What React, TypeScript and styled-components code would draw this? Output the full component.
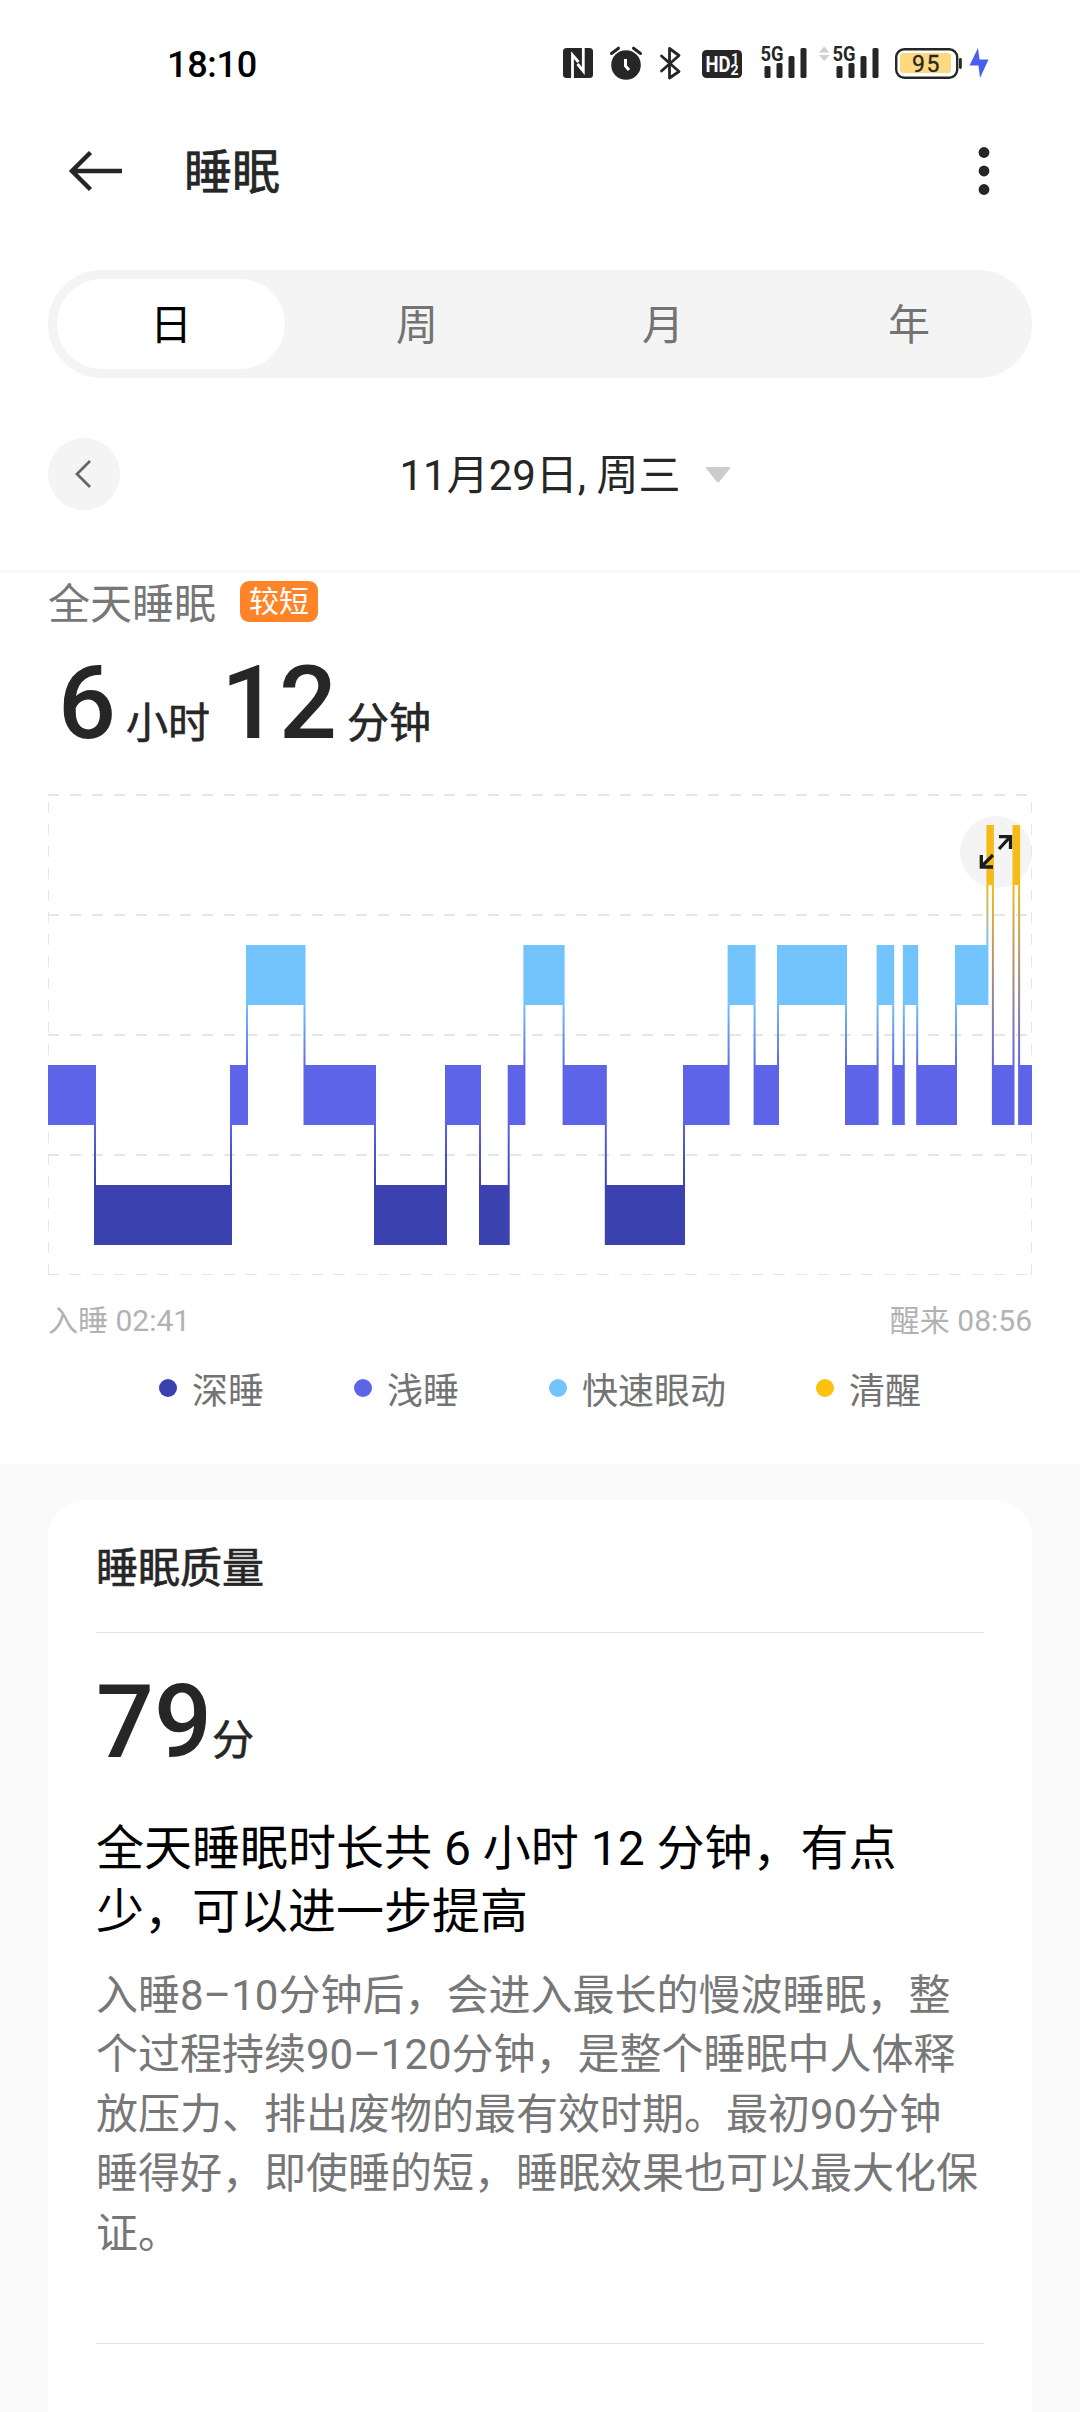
import React from "react";
import styled, { createGlobalStyle } from "styled-components";

const GlobalStyle = createGlobalStyle`
  * { box-sizing: border-box; }
  body { margin: 0; background: #fff; }
`;

const Screen = styled.main`
  width: 1080px;
  height: 2412px;
  overflow: hidden;
  display: flex;
  flex-direction: column;
  background: #fff;
  color: #262626;
  font-family: Roboto, "Noto Sans CJK SC", sans-serif;
`;

const StatusBar = styled.header`
  height: 126px;
  padding: 0 91px 0 167px;
  display: flex;
  align-items: center;
  justify-content: space-between;
`;

const Clock = styled.span`
  font-size: 36px;
  font-weight: 500;
  line-height: 42px;
  letter-spacing: -0.3px;
  color: #000;
  padding-top: 3px;
`;

const StatusIcons = styled.svg`
  display: block;
  width: 430px;
  height: 54px;
`;

const AppBar = styled.nav`
  height: 90px;
  padding: 0 90px 0 66px;
  display: flex;
  align-items: center;
`;

const BackIcon = styled.svg`
  width: 60px;
  height: 48px;
`;

const PageTitle = styled.h1`
  flex: 1;
  margin: 0 0 0 58px;
  padding-top: 4px;
  font-size: 48px;
  font-weight: 400;
  line-height: 60px;
  -webkit-text-stroke: 0.7px currentColor;
`;

const MenuIcon = styled.svg`
  width: 12px;
  height: 50px;
`;

const Tabs = styled.div`
  margin: 54px 48px 0;
  height: 108px;
  display: grid;
  grid-template-columns: repeat(4, 1fr);
  border-radius: 54px;
  background: #f4f4f4;
`;

const Tab = styled.div<{ $active?: boolean }>`
  margin: 9px;
  padding-top: 4px;
  display: flex;
  align-items: center;
  justify-content: center;
  border-radius: 45px;
  background: ${(p) => (p.$active ? "#fff" : "transparent")};
  color: ${(p) => (p.$active ? "#000" : "#737373")};
  font-size: 42px;
  line-height: 60px;
`;

const DateBar = styled.div`
  height: 192px;
  padding: 0 48px;
  display: grid;
  grid-template-columns: 72px 1fr 72px;
  align-items: center;
`;

const RoundButton = styled.div`
  width: 72px;
  height: 72px;
  display: flex;
  align-items: center;
  justify-content: center;
  border-radius: 50%;
  background: #f4f4f4;
`;

const DateLabel = styled.div`
  display: flex;
  align-items: center;
  justify-content: center;
  gap: 24px;
  padding: 4px 0 0 50px;
  font-size: 42px;
  line-height: 60px;
`;

const Summary = styled.section`
  height: 894px;
  border-top: 3px solid #f8f8f8;
  padding: 0 48px;
  display: flex;
  flex-direction: column;
`;

const SummaryHead = styled.div`
  height: 60px;
  padding-top: 4px;
  display: flex;
  align-items: center;
  gap: 24px;
  color: #777;
  font-size: 42px;
  line-height: 56px;
`;

const Badge = styled.span`
  height: 41px;
  margin-bottom: 7px;
  padding: 0 9px;
  border-radius: 9px;
  background: #ff8427;
  color: #fff;
  font-size: 30px;
  line-height: 41px;
`;

const Duration = styled.div`
  height: 120px;
  padding: 4px 0 0 10px;
  display: flex;
  align-items: baseline;
`;

const BigNumber = styled.span<{ $gap?: number }>`
  margin-left: ${(p) => p.$gap ?? 0}px;
  font-size: 102px;
  font-weight: 500;
  line-height: 132px;
`;

const Unit = styled.span<{ $gap?: number; $lift?: number }>`
  margin-left: ${(p) => p.$gap ?? 0}px;
  margin-bottom: ${(p) => p.$lift ?? 0}px;
  font-size: 42px;
  font-weight: 400;
  line-height: 60px;
  -webkit-text-stroke: 0.6px currentColor;
`;

const ChartArea = styled.div`
  position: relative;
  margin-top: 41px;
  height: 482px;
`;

const Chart = styled.svg`
  position: relative;
  display: block;
  width: 984px;
  height: 482px;
`;

const ExpandButton = styled(RoundButton)`
  position: absolute;
  top: 22px;
  right: 0;
`;

const TimeRange = styled.div`
  margin-top: 24px;
  display: flex;
  justify-content: space-between;
  color: #b2b2b2;
  font-size: 30px;
  line-height: 42px;
`;

const Legend = styled.div`
  margin-top: 23px;
  display: flex;
  justify-content: center;
  gap: 90px;
`;

const LegendItem = styled.div`
  display: flex;
  align-items: center;
  gap: 15px;
  color: #737373;
  font-size: 36px;
  line-height: 54px;
`;

const Dot = styled.i<{ $color: string }>`
  width: 18px;
  height: 18px;
  margin-bottom: 8px;
  border-radius: 50%;
  background: ${(p) => p.$color};
`;

const Details = styled.section`
  flex: 1;
  padding: 36px 48px 0;
  display: flex;
  background: #fafafa;
`;

const Card = styled.article`
  flex: 1;
  padding: 0 48px;
  border-radius: 38px 38px 0 0;
  background: #fff;
`;

const CardTitle = styled.h2`
  height: 133px;
  margin: 0;
  padding-top: 39px;
  border-bottom: 1px solid #e2e2e2;
  font-size: 42px;
  font-weight: 400;
  line-height: 60px;
  -webkit-text-stroke: 0.7px currentColor;
`;

const Score = styled.div`
  height: 184px;
  padding-top: 23px;
  display: flex;
  align-items: baseline;
`;

const ScoreUnit = styled(Unit)`
  align-self: flex-start;
  margin-top: 55px;
`;

const Verdict = styled.p`
  margin: 0;
  color: #000;
  font-size: 48px;
  line-height: 63px;
  white-space: nowrap;
`;

const Advice = styled.p`
  height: 378px;
  margin: 23px 0 0;
  border-bottom: 1px solid #e2e2e2;
  color: #777;
  font-size: 42px;
  line-height: 59.4px;
  white-space: nowrap;
`;

type Stage = "deep" | "light" | "rem" | "awake";

const stageColor: Record<Stage, string> = {
  deep: "#3b41af",
  light: "#5d64e8",
  rem: "#73c4fd",
  awake: "#f5bb16",
};

const stageTop: Record<Stage, number> = { awake: 31, rem: 151, light: 271, deep: 391 };

// Each stage runs from the end of the one before it to this x.
const night: [Stage, number][] = [
  ["light", 47], ["deep", 183], ["light", 199], ["rem", 256.5], ["light", 327],
  ["deep", 398], ["light", 432], ["deep", 460.7], ["light", 476.4], ["rem", 515.6],
  ["light", 557.8], ["deep", 636], ["light", 680.6], ["rem", 706.6], ["light", 730],
  ["rem", 798], ["light", 829.6], ["rem", 845.2], ["light", 855.8], ["rem", 869.2],
  ["light", 908], ["rem", 939.4], ["awake", 944.9], ["light", 965.5], ["awake", 971.1],
  ["light", 984],
];

const legend: [Stage, string, string][] = [
  ["deep", "深睡", "#3b41af"],
  ["light", "浅睡", "#5d64e8"],
  ["rem", "快速眼动", "#73c4fd"],
  ["awake", "清醒", "#fdc10f"],
];

function SleepChart() {
  return (
    <Chart viewBox="0 0 984 482">
      <defs>
        {night.slice(1).map(([stage], i) => {
          const prev = night[i][0];
          const up = stageTop[stage] < stageTop[prev];
          const [hi, lo] = up ? [stage, prev] : [prev, stage];
          return (
            <linearGradient
              key={i}
              id={`link${i}`}
              gradientUnits="userSpaceOnUse"
              x1="0"
              x2="0"
              y1={stageTop[hi] + 56}
              y2={stageTop[lo] + 4}
            >
              <stop offset="0" stopColor={stageColor[hi]} />
              <stop offset="1" stopColor={stageColor[lo]} />
            </linearGradient>
          );
        })}
      </defs>
      <g stroke="#e6e6e6" strokeWidth="2" strokeDasharray="11 11">
        {[1, 121, 241, 361].map((y) => (
          <line key={y} x1="0" x2="984" y1={y} y2={y} />
        ))}
        <line x1="0" x2="984" y1="480.5" y2="480.5" strokeWidth="1" />
        <line x1="0.5" x2="0.5" y1="481" y2="1" strokeWidth="1" />
        <line x1="983.5" x2="983.5" y1="481" y2="1" strokeWidth="1" />
      </g>
      {night.map(([stage, end], i) => {
        const x0 = i === 0 ? 0 : night[i - 1][1] - 1;
        const x1 = i === night.length - 1 ? end : end + 1;
        return (
          <rect key={i} x={x0} y={stageTop[stage]} width={x1 - x0} height="60" fill={stageColor[stage]} />
        );
      })}
      {night.slice(1).map(([stage], i) => {
        const [prev, x] = night[i];
        const top = Math.min(stageTop[stage], stageTop[prev]) + 60;
        const bottom = Math.max(stageTop[stage], stageTop[prev]);
        return (
          <rect key={i} x={x - 1} y={top} width="2" height={bottom - top} fill={`url(#link${i})`} />
        );
      })}
      <g fill="none" stroke="#1c1c1c" strokeWidth="3.3">
        <path d="M951 55L962 43M951 42.700H962.500V55" />
        <path d="M945 61L934 72M933.300 61V73H945" />
      </g>
    </Chart>
  );
}

function SignalBars({ x }: { x: number }) {
  return (
    <g transform={`translate(${x} 0)`}>
      <text x="-1" y="25" fontSize="21" fontWeight="700" textLength="23" lengthAdjust="spacingAndGlyphs">5G</text>
      <rect x="3" y="30" width="6" height="12" rx="1.500" />
      <rect x="15" y="27" width="6" height="15" rx="1.500" />
      <rect x="27" y="20" width="6" height="22" rx="1.500" />
      <rect x="39" y="12" width="6" height="30" rx="1.500" />
    </g>
  );
}

function StatusGlyphs() {
  return (
    <StatusIcons viewBox="559 36 430 54" fill="#262626">
      <rect x="563" y="48" width="30" height="30" rx="3.500" />
      <path d="M572.500 78V55L578.500 62M583.300 48V71L577.500 64" fill="none" stroke="#fff" strokeWidth="2.800" />
      <circle cx="626" cy="65" r="14.800" />
      <path d="M611.500 53.500L618.500 48.200M640.500 53.500L633.500 48.200" stroke="#262626" strokeWidth="3" strokeLinecap="round" />
      <path d="M625.500 59V66L629 70" fill="none" stroke="#fff" strokeWidth="3" />
      <path d="M661.500 56L679 71.500L669.500 78V48.500L679 55.500L661.500 71" fill="none" stroke="#262626" strokeWidth="2.800" strokeLinejoin="round" strokeLinecap="round" />
      <rect x="702" y="50" width="40" height="28" rx="4.500" />
      <text x="705.500" y="72" fontSize="22" fontWeight="700" fill="#fff" textLength="25" lengthAdjust="spacingAndGlyphs">HD</text>
      <text x="731" y="63.500" fontSize="14" fontWeight="700" fill="#fff">1</text>
      <text x="730.500" y="75" fontSize="14" fontWeight="700" fill="#fff">2</text>
      <g transform="translate(0 36)">
        <SignalBars x={761.5} />
        <SignalBars x={833.5} />
      </g>
      <path d="M819 52.500L824.200 46.500L829.500 52.500ZM819 55L824.200 61L829.500 55Z" fill="#cfcfcf" />
      <rect x="896.200" y="49.200" width="61" height="28.600" rx="8" fill="#fff" stroke="#262626" strokeWidth="2.400" />
      <rect x="900" y="53" width="51" height="20" rx="3.500" fill="#ffd980" />
      <rect x="959" y="58" width="2.800" height="11" rx="1.400" />
      <text x="912" y="71.700" fontSize="23" textLength="27.500" stroke="#262626" strokeWidth="0.300">95</text>
      <path d="M978 48L969.500 65.500H978.500L980 78L988.500 59.500H979.500Z" fill="#4b5df0" />
    </StatusIcons>
  );
}

export default function App() {
  return (
    <Screen>
      <GlobalStyle />
      <StatusBar>
        <Clock>18:10</Clock>
        <StatusGlyphs />
      </StatusBar>
      <AppBar>
        <BackIcon viewBox="66 147 60 48" fill="none" stroke="#262626" strokeWidth="4.500">
          <path d="M122 171H73M90.500 152.500L72 171L90.500 189.500" />
        </BackIcon>
        <PageTitle>睡眠</PageTitle>
        <MenuIcon viewBox="0 0 12 50" fill="#262626">
          <circle cx="6" cy="6.500" r="5.400" />
          <circle cx="6" cy="25" r="5.400" />
          <circle cx="6" cy="43.500" r="5.400" />
        </MenuIcon>
      </AppBar>
      <Tabs>
        <Tab $active>日</Tab>
        <Tab>周</Tab>
        <Tab>月</Tab>
        <Tab>年</Tab>
      </Tabs>
      <DateBar>
        <RoundButton>
          <svg width="24" height="36" fill="none" stroke="#666" strokeWidth="2.800">
            <path d="M18 5L5 18L18 31" />
          </svg>
        </RoundButton>
        <DateLabel>
          11月29日, 周三
          <svg width="26" height="20" fill="#ccc">
            <path d="M2 1H24Q26 1 24.500 3L14.500 15.500Q13 17 11.500 15.500L1.500 3Q0 1 2 1Z" />
          </svg>
        </DateLabel>
      </DateBar>
      <Summary>
        <SummaryHead>
          全天睡眠
          <Badge>较短</Badge>
        </SummaryHead>
        <Duration>
          <BigNumber>6</BigNumber>
          <Unit $gap={10}>小时</Unit>
          <BigNumber $gap={11}>12</BigNumber>
          <Unit $gap={10}>分钟</Unit>
        </Duration>
        <ChartArea>
          <ExpandButton />
          <SleepChart />
        </ChartArea>
        <TimeRange>
          <span>入睡 02:41</span>
          <span>醒来 08:56</span>
        </TimeRange>
        <Legend>
          {legend.map(([stage, label, color]) => (
            <LegendItem key={stage}>
              <Dot $color={color} />
              {label}
            </LegendItem>
          ))}
        </Legend>
      </Summary>
      <Details>
        <Card>
          <CardTitle>睡眠质量</CardTitle>
          <Score>
            <BigNumber>79</BigNumber>
            <ScoreUnit>分</ScoreUnit>
          </Score>
          <Verdict>
            全天睡眠时长共 6 小时 12 分钟，有点
            <br />
            少，可以进一步提高
          </Verdict>
          <Advice>
            入睡8–10分钟后，会进入最长的慢波睡眠，整
            <br />
            个过程持续90–120分钟，是整个睡眠中人体释
            <br />
            放压力、排出废物的最有效时期。最初90分钟
            <br />
            睡得好，即使睡的短，睡眠效果也可以最大化保
            <br />
            证。
          </Advice>
        </Card>
      </Details>
    </Screen>
  );
}
